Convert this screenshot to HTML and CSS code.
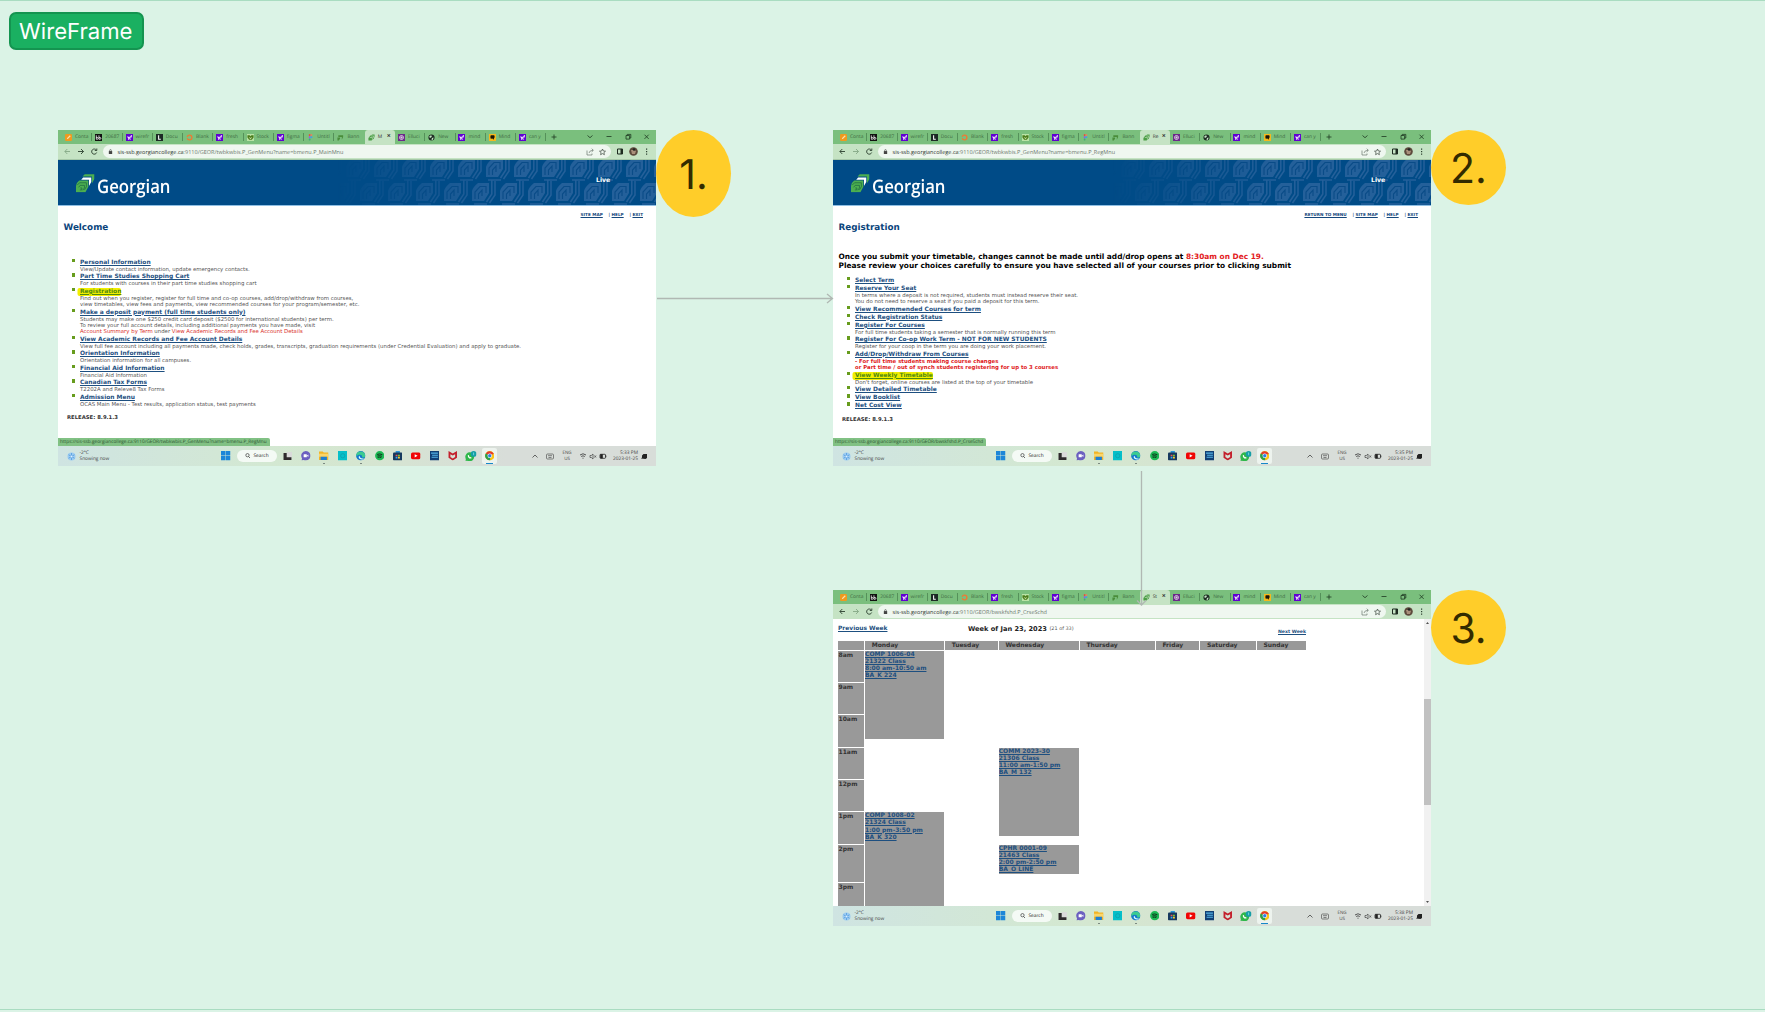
FILE: index.html
```html
<!DOCTYPE html>
<html lang="en">
<head>
<meta charset="utf-8">
<title>WireFrame</title>
<link rel="stylesheet" href="styles.css">
</head>
<body>
<svg class="sprite" aria-hidden="true">
  <defs>
    <symbol id="i-cont" viewBox="0 0 16 16"><rect width="16" height="16" rx="3" fill="#f09a1f"/><path d="M4 12l1-3 6-6 2 2-6 6z" fill="#fbe3b0"/></symbol>
    <symbol id="i-bb" viewBox="0 0 16 16"><rect width="16" height="16" fill="#111"/><path d="M3 3v9h2.500a2 2 0 0 0 0-4H3M9 3v9h2.500a2 2 0 0 0 0-4H9" fill="none" stroke="#fff" stroke-width="1.700"/></symbol>
    <symbol id="i-yahoo" viewBox="0 0 16 16"><rect width="16" height="16" fill="#5f01d1"/><path d="M2.500 5.500h3l1.500 3 1.500-3h2l-3.500 8H5l.9-2zM11 3h3l-2 5.500h-2z" fill="#fff"/><circle cx="10.500" cy="11.500" r="1.300" fill="#fff"/></symbol>
    <symbol id="i-l" viewBox="0 0 16 16"><rect width="16" height="16" fill="#1c2a25"/><path d="M6 3v9h5" fill="none" stroke="#fff" stroke-width="2.400"/></symbol>
    <symbol id="i-ring" viewBox="0 0 16 16"><circle cx="8" cy="8" r="5.500" fill="none" stroke="#ee7a33" stroke-width="3" stroke-dasharray="14 3"/></symbol>
    <symbol id="i-frog" viewBox="0 0 16 16"><rect width="16" height="16" fill="#b9e3a5"/><path d="M1 3h5l2 2 2-2h5v5l-4 5H5L1 8z" fill="#4b7d1d"/><path d="M4 7l3 4h2l3-4-4 2z" fill="#e8f3c4"/></symbol>
    <symbol id="i-figma" viewBox="0 0 16 16"><rect x="4" y="0" width="4" height="5" rx="2" fill="#e8503a"/><rect x="8" y="0" width="4" height="5" rx="2" fill="#e88060"/><rect x="4" y="5" width="4" height="5" rx="2" fill="#9259e8"/><circle cx="10" cy="7.500" r="2.300" fill="#39a5e8"/><rect x="4" y="10" width="4" height="5" rx="2" fill="#3fb173"/></symbol>
    <symbol id="i-banner" viewBox="0 0 16 16"><path d="M3 3h11v4l-3 6v-6H3zM1 8h6v3l-3 4H1z" fill="#4a8d3b"/></symbol>
    <symbol id="i-leaf" viewBox="0 0 16 16"><path d="M1 15V9l4-5 5-3h5v5l-2 5-5 4z" fill="#4b9d45"/><path d="M4 8h6v5M7 4.500h6V9" fill="none" stroke="#d9f0d5" stroke-width="1.200"/></symbol>
    <symbol id="i-ellu" viewBox="0 0 16 16"><rect width="16" height="16" fill="#6b2a8a"/><circle cx="8" cy="8" r="4.500" fill="none" stroke="#fff" stroke-width="1.600"/><path d="M5 8h6M8 5v6" stroke="#fff" stroke-width="1.200"/></symbol>
    <symbol id="i-globe" viewBox="0 0 16 16"><circle cx="8" cy="8" r="7" fill="#1d2b22"/><path d="M3 5l4-2 2 2-2 3-3 1zM9 9l4-1-2 5-3 1z" fill="#c3e3c4"/></symbol>
    <symbol id="i-mind" viewBox="0 0 16 16"><rect width="16" height="16" fill="#f5b91d"/><path d="M4 3h8l1 4-3 6-2-3-4 1-1-4z" fill="#1a1508"/></symbol>
    <symbol id="i-logo" viewBox="0 0 57 57"><path d="M27 1h30v14l-8 14V8H20z" fill="#4caf50"/><path d="M16 18l6-7h25v14l-7 12V18z" fill="#fff"/><path d="M0 36q0-8 10-16h28v19L29 56H0z" fill="#4caf50"/><path d="M4 34l7-7h21v12l-6 10M8 41l5-6h13v8l-5 7M12 49h6v-6h-5" fill="none" stroke="#17603f" stroke-width="2"/></symbol>

    <symbol id="i-cloud" viewBox="0 0 18 18"><circle cx="9" cy="9" r="8" fill="#9ccbf0"/><path d="M9 2v14M3 5.500l12 7M3 12.500l12-7" stroke="#4b98e0" stroke-width="1.500"/><circle cx="9" cy="9" r="2" fill="#dff0ff"/></symbol>
    <symbol id="i-win" viewBox="0 0 18 18"><path d="M0 0h8.600v8.600H0zM9.400 0H18v8.600H9.400zM0 9.400h8.600V18H0zM9.400 9.400H18V18H9.400z" fill="#1c86d8"/></symbol>
    <symbol id="i-task" viewBox="0 0 18 18"><rect x="7" y="2" width="11" height="11" fill="#dadada"/><path d="M1 4h6v8h9v5H1z" fill="#2e2a2c"/></symbol>
    <symbol id="i-chat" viewBox="0 0 18 18"><path d="M9 0a9 9 0 1 1-4 17l-4 1 1-4A9 9 0 0 1 9 0z" fill="#6b5fc0"/><rect x="5" y="6" width="6" height="6" rx="1" fill="#fff"/><path d="M11 9l3-2.500v5z" fill="#fff"/></symbol>
    <symbol id="i-folder" viewBox="0 0 18 18"><path d="M0 1h7l2 2h9v14H0z" fill="#f3b426"/><path d="M0 5h18v6H0z" fill="#fad569"/><path d="M3 11h12v6H3z" fill="#1f7fd1"/></symbol>
    <symbol id="i-cyan" viewBox="0 0 18 18"><rect width="18" height="18" fill="#05bfc9"/><circle cx="9" cy="9" r="4" fill="none" stroke="#12919e"/></symbol>
    <symbol id="i-edge" viewBox="0 0 18 18"><circle cx="9" cy="9" r="8.800" fill="#1478cc"/><path d="M.5 7a8.700 8.700 0 0 1 17 2c0 3-3 4-6 3 1-3-1-5-4-5S2 8 1 10z" fill="#3ccb8f"/><path d="M7 9c0 4 3 6 8 5l-2 2c-4 1-8-1-8-5z" fill="#dff"/></symbol>
    <symbol id="i-spot" viewBox="0 0 18 18"><circle cx="9" cy="9" r="8.800" fill="#1db954"/><path d="M4 6.500q5-2 10 .5M4.500 9.500q4.500-1.500 8.500.5M5 12q4-1 7 .5" fill="none" stroke="#0b1f12" stroke-width="1.600"/></symbol>
    <symbol id="i-store" viewBox="0 0 18 18"><path d="M5 0h8v4H5z" fill="#2c95d8"/><rect y="3" width="18" height="15" rx="2" fill="#17395f"/><path d="M5 7h3.500v3H5z" fill="#e55"/><path d="M9.500 7H13v3H9.500z" fill="#7c3"/><path d="M5 11h3.500v3H5z" fill="#3ae"/><path d="M9.500 11H13v3H9.500z" fill="#fc3"/></symbol>
    <symbol id="i-yt" viewBox="0 0 18 18"><rect y="3" width="18" height="12.500" rx="3" fill="#f00505"/><path d="M7 6l5.500 3.200L7 12.500z" fill="#fff"/></symbol>
    <symbol id="i-news" viewBox="0 0 18 18"><rect width="18" height="18" fill="#123f74"/><path d="M2 4h13M4 8h11M3 12h12" stroke="#55b4e6" stroke-width="2"/></symbol>
    <symbol id="i-mcafee" viewBox="0 0 18 18"><path d="M1 0l8 4.500L17 0v13l-8 5-8-5zM4.500 6v5.500L9 14l4.500-2.500V6L9 8.500z" fill="#c3202c" fill-rule="evenodd"/></symbol>
    <symbol id="i-wa" viewBox="0 0 22 20"><circle cx="9" cy="11" r="8.500" fill="#2fb74a"/><path d="M1 19l1-5 4 4z" fill="#2fb74a"/><path d="M5.500 7.500c-1 5 4 9 7.500 6l-2-2-1.500.5-2-2.500.5-1.500z" fill="#fff"/><circle cx="16.500" cy="5.500" r="5.500" fill="#169ea6"/><path d="M15.500 4l1-.7V8" stroke="#bff" fill="none"/></symbol>
    <symbol id="i-chrome" viewBox="0 0 18 18"><circle cx="9" cy="9" r="8.800" fill="#fbc417"/><path d="M9 9L1.400 4.500A8.800 8.800 0 0 1 16.700 5z" fill="#e33b2e"/><path d="M9 9l1 8.700A8.800 8.800 0 0 1 1.400 4.500z" fill="#2da04d"/><circle cx="9" cy="9" r="4.200" fill="#fff"/><circle cx="9" cy="9" r="3.200" fill="#2f7de8"/></symbol>

    <symbol id="i-nav-shapes" viewBox="0 0 45 15"><path d="M38.300 6A2.600 2.600 0 1 0 38.700 8.500M38.800 4.500v2h-2" fill="none" stroke="#2c4130" stroke-width=".9"/></symbol>
    <symbol id="i-lock" viewBox="0 0 6 8"><rect x="1" y="3.500" width="4" height="3.500" fill="#444"/><path d="M2 4V2.700a1 1 0 0 1 2 0V4" fill="none" stroke="#444" stroke-width=".7"/></symbol>
    <symbol id="i-bookmark" viewBox="0 0 24 12"><path d="M2 4.500V9h5V7.500M4 7q.5-2.700 4-2.700M6.700 2.700l1.700 1.600-1.700 1.600" fill="none" stroke="#6c776e" stroke-width=".7"/><path d="M17.500 3l.9 2 2.100.2-1.600 1.400.5 2.100-1.900-1.100-1.900 1.100.5-2.100-1.600-1.400 2.100-.2z" fill="none" stroke="#3a453c" stroke-width=".7"/></symbol>
    <symbol id="i-tools" viewBox="0 0 45 15"><path d="M6.500 5h5v5h-5z" fill="none" stroke="#1d2b20"/><path d="M9.500 5H12v5H9.500z" fill="#1d2b20"/><circle cx="22.500" cy="7.500" r="4.300" fill="#5d4a3c"/><path d="M20 6h3l2 1-1 3h-3z" fill="#a98f7a"/><circle cx="23" cy="5.500" r="1.200" fill="#222"/><path d="M35 4.500h1.200v1.200H35zM35 7h1.200v1.200H35zM35 9.500h1.200v1.200H35z" fill="#2c4130"/></symbol>

    <g id="leaf-shape">
      <path d="M2 20V10q1-4 6-8H19V12L14 20z" fill="#24609a"/>
      <path d="M5 18V11L10 5.500H16V12M8.500 18v-5L12 9v6" fill="none" stroke="#0a4c88" stroke-width="1.200"/>
      <path d="M16.500 21L21.800 13V-1M19.500 22L25 14V0M4 23H17" fill="none" stroke="#24609a" stroke-width="1.500"/>
    </g>
    <pattern id="leaves" width="28" height="48" patternUnits="userSpaceOnUse" patternTransform="translate(6 -3)">
      <use href="#leaf-shape"/>
      <use href="#leaf-shape" x="14" y="24"/>
      <use href="#leaf-shape" x="-14" y="24"/>
    </pattern>
  </defs>
</svg>

<template id="tabs-template">
  <div class="tabs">
    <span class="tab"><svg><use href="#i-cont"/></svg><i>Conta</i></span>
    <span class="tab"><svg><use href="#i-bb"/></svg><i>20687</i></span>
    <span class="tab"><svg><use href="#i-yahoo"/></svg><i>wirefr</i></span>
    <span class="tab"><svg><use href="#i-l"/></svg><i>Docu</i></span>
    <span class="tab"><svg><use href="#i-ring"/></svg><i>Blank</i></span>
    <span class="tab"><svg><use href="#i-yahoo"/></svg><i>fresh</i></span>
    <span class="tab"><svg><use href="#i-frog"/></svg><i>Stock</i></span>
    <span class="tab"><svg><use href="#i-yahoo"/></svg><i>figma</i></span>
    <span class="tab"><svg><use href="#i-figma"/></svg><i>Untitl</i></span>
    <span class="tab last"><svg><use href="#i-banner"/></svg><i>Bann</i></span>
    <span class="tab active"><svg><use href="#i-leaf"/></svg><i class="current"></i><b>×</b></span>
    <span class="tab"><svg><use href="#i-ellu"/></svg><i>Elluci</i></span>
    <span class="tab"><svg><use href="#i-globe"/></svg><i>New</i></span>
    <span class="tab"><svg><use href="#i-yahoo"/></svg><i>mind</i></span>
    <span class="tab"><svg><use href="#i-mind"/></svg><i>Mind</i></span>
    <span class="tab"><svg><use href="#i-yahoo"/></svg><i>can y</i></span>
    <svg class="controls" viewBox="0 0 110 14"><path d="M5.500 7h5M8 4.500v5M41.500 5.500l2.500 2.200 2.500-2.200M60.500 6.500h5M80 5.500h3.600v3.600H80zM81.200 5.500V4.400h3.600V8h-1.200M98.500 4.700l4.200 4.200M102.700 4.700l-4.200 4.200" fill="none" stroke="#1e3a22" stroke-width=".8"/></svg>
  </div>
</template>

<template id="taskbar-template">
  <div class="taskbar">
    <svg class="weather"><use href="#i-cloud"/></svg>
    <span class="temp">-2°C<br>Snowing now</span>
    <div class="apps">
      <svg><use href="#i-win"/></svg>
      <span class="search"><svg viewBox="0 0 10 10"><circle cx="4.500" cy="4" r="3" fill="none" stroke="#222" stroke-width="1.100"/><path d="M6.500 6.500l3 3" stroke="#222" stroke-width="1.200"/></svg>Search</span>
      <svg><use href="#i-task"/></svg>
      <svg><use href="#i-chat"/></svg>
      <span class="running"><svg><use href="#i-folder"/></svg></span>
      <svg><use href="#i-cyan"/></svg>
      <span class="running"><svg><use href="#i-edge"/></svg></span>
      <svg><use href="#i-spot"/></svg>
      <svg><use href="#i-store"/></svg>
      <svg><use href="#i-yt"/></svg>
      <svg><use href="#i-news"/></svg>
      <svg><use href="#i-mcafee"/></svg>
      <svg class="wide"><use href="#i-wa"/></svg>
      <span class="running focused"><svg><use href="#i-chrome"/></svg></span>
    </div>
    <svg class="tray" viewBox="0 0 24 20"><path d="M1.500 11.500L4 9l2.500 2.500" fill="none" stroke="#444" stroke-width=".8"/><rect x="15.500" y="8" width="7" height="5" rx="1" fill="none" stroke="#555" stroke-width=".7"/><path d="M17 9.700h4M17.500 11.500h3" stroke="#555" stroke-width=".7"/></svg>
    <span class="lang">ENG<br>US</span>
    <svg class="net" viewBox="0 0 28 20"><path d="M1 9q3-2.500 6 0M2.200 10.500q1.800-1.400 3.600 0M3.500 12.200h1" fill="none" stroke="#444" stroke-width=".9"/><path d="M11 9.500h1.300L14 8v5l-1.700-1.500H11zM15.500 9.500l1.500 2M17 9.500l-1.500 2" fill="none" stroke="#444" stroke-width=".7"/><rect x="21" y="8.300" width="5.500" height="4" rx=".7" fill="none" stroke="#222" stroke-width=".8"/><path d="M21.500 8.500h2v3.600h-2zM27 9.500v1.700" fill="#222" stroke="#222" stroke-width=".6"/></svg>
    <span class="clock"><span class="time"></span><br>2023-01-25</span>
    <svg class="bell" viewBox="0 0 8 8"><path d="M1 6.500l1-1V3.500L3.500 2H7v4L5.500 7z" fill="#222"/></svg>
  </div>
</template>

<main class="board">
  <h1 class="tag">WireFrame</h1>

  <section class="window w1" data-tab="M" data-time="5:33 PM">
    <div class="toolbar">
      <svg class="nav" viewBox="0 0 45 15"><g fill="none" stroke="#2c4130" stroke-width=".9"><path stroke="#84a886" d="M12 7.500H7M9.300 5L6.800 7.500 9.300 10"/><path d="M20 7.500h5.500M23 5l2.500 2.500L23 10"/></g><use href="#i-nav-shapes" width="45" height="15"/></svg>
      <div class="address"><svg class="lock"><use href="#i-lock"/></svg><span class="url"><b>sis-ssb.georgiancollege.ca</b>:9110/GEOR/twbkwbis.P_GenMenu?name=bmenu.P_MainMnu</span><svg class="bookmark"><use href="#i-bookmark"/></svg></div>
      <svg class="nav"><use href="#i-tools"/></svg>
    </div>
    <div class="page">
      <header class="banner"><svg class="logo"><use href="#i-logo"/></svg><span class="brand">Georgian</span><svg class="pattern"><rect width="318" height="45" fill="url(#leaves)"/></svg><span class="live">Live</span></header>
      <nav class="links"><a>SITE MAP</a><span>| <a>HELP</a></span><span>| <a>EXIT</a></span></nav>
      <h2>Welcome</h2>
      <ul class="menu">
        <li><a>Personal Information</a><p>View/Update contact information, update emergency contacts.</p></li>
        <li><a>Part Time Studies Shopping Cart</a><p>For students with courses in their part time studies shopping cart</p></li>
        <li><a class="hl">Registration</a><p>Find out when you register, register for full time and co-op courses, add/drop/withdraw from courses,<br>view timetables, view fees and payments, view recommended courses for your program/semester, etc.</p></li>
        <li><a>Make a deposit payment (full time students only)</a><p>Students may make one $250 credit card deposit ($2500 for international students) per term.<br>To review your full account details, including additional payments you have made, visit<br><em>Account Summary by Term</em> under <em>View Academic Records and Fee Account Details</em></p></li>
        <li><a>View Academic Records and Fee Account Details</a><p>View full fee account including all payments made, check holds, grades, transcripts, graduation requirements (under Credential Evaluation) and apply to graduate.</p></li>
        <li><a>Orientation Information</a><p>Orientation information for all campuses.</p></li>
        <li><a>Financial Aid Information</a><p>Financial Aid Information</p></li>
        <li><a>Canadian Tax Forms</a><p>T2202A and Releve8 Tax Forms</p></li>
        <li><a>Admission Menu</a><p>OCAS Main Menu - Test results, application status, test payments</p></li>
      </ul>
      <p class="release">RELEASE: 8.9.1.3</p>
      <p class="status">https://sis-ssb.georgiancollege.ca:9110/GEOR/twbkwbis.P_GenMenu?name=bmenu.P_RegMnu</p>
    </div>
  </section>

  <section class="window w2" data-tab="Re" data-time="5:35 PM">
    <div class="toolbar">
      <svg class="nav" viewBox="0 0 45 15"><g fill="none" stroke="#2c4130" stroke-width=".9"><path d="M12 7.500H7M9.300 5L6.800 7.500 9.300 10"/><path stroke="#84a886" d="M20 7.500h5.500M23 5l2.500 2.500L23 10"/></g><use href="#i-nav-shapes" width="45" height="15"/></svg>
      <div class="address"><svg class="lock"><use href="#i-lock"/></svg><span class="url"><b>sis-ssb.georgiancollege.ca</b>:9110/GEOR/twbkwbis.P_GenMenu?name=bmenu.P_RegMnu</span><svg class="bookmark"><use href="#i-bookmark"/></svg></div>
      <svg class="nav"><use href="#i-tools"/></svg>
    </div>
    <div class="page">
      <header class="banner"><svg class="logo"><use href="#i-logo"/></svg><span class="brand">Georgian</span><svg class="pattern"><rect width="318" height="45" fill="url(#leaves)"/></svg><span class="live">Live</span></header>
      <nav class="links"><a>RETURN TO MENU</a><span>| <a>SITE MAP</a></span><span>| <a>HELP</a></span><span>| <a>EXIT</a></span></nav>
      <h2>Registration</h2>
      <p class="notice">Once you submit your timetable, changes cannot be made until add/drop opens at <em>8:30am on Dec 19.</em><br>Please review your choices carefully to ensure you have selected all of your courses prior to clicking submit</p>
      <ul class="menu after-notice">
        <li><a>Select Term</a></li>
        <li><a>Reserve Your Seat</a><p>In terms where a deposit is not required, students must instead reserve their seat.<br>You do not need to reserve a seat if you paid a deposit for this term.</p></li>
        <li><a>View Recommended Courses for term</a></li>
        <li><a>Check Registration Status</a></li>
        <li><a>Register For Courses</a><p>For full time students taking a semester that is normally running this term</p></li>
        <li><a>Register For Co-op Work Term - NOT FOR NEW STUDENTS</a><p>Register for your coop in the term you are doing your work placement.</p></li>
        <li><a>Add/Drop/Withdraw From Courses</a><p class="warn">- For full time students making course changes<br>or Part time / out of synch students registering for up to 3 courses</p></li>
        <li><a class="hl">View Weekly Timetable</a><p>Don't forget, online courses are listed at the top of your timetable</p></li>
        <li><a>View Detailed Timetable</a></li>
        <li><a>View Booklist</a></li>
        <li><a>Net Cost View</a></li>
      </ul>
      <p class="release">RELEASE: 8.9.1.3</p>
      <p class="status">https://sis-ssb.georgiancollege.ca:9110/GEOR/bwskfshd.P_CrseSchd</p>
    </div>
  </section>

  <section class="window w3" data-tab="St" data-time="5:38 PM">
    <div class="toolbar">
      <svg class="nav" viewBox="0 0 45 15"><g fill="none" stroke="#2c4130" stroke-width=".9"><path d="M12 7.500H7M9.300 5L6.800 7.500 9.300 10"/><path stroke="#84a886" d="M20 7.500h5.500M23 5l2.500 2.500L23 10"/></g><use href="#i-nav-shapes" width="45" height="15"/></svg>
      <div class="address"><svg class="lock"><use href="#i-lock"/></svg><span class="url"><b>sis-ssb.georgiancollege.ca</b>:9110/GEOR/bwskfshd.P_CrseSchd</span><svg class="bookmark"><use href="#i-bookmark"/></svg></div>
      <svg class="nav"><use href="#i-tools"/></svg>
    </div>
    <div class="page schedule">
      <div class="week">
        <div class="weekbar"><a class="prev">Previous Week</a><strong>Week of Jan 23, 2023</strong><small>(21 of 33)</small><a class="next">Next Week</a></div>
        <div class="grid">
          <b class="day"></b><b class="day">Monday</b><b class="day">Tuesday</b><b class="day">Wednesday</b><b class="day">Thursday</b><b class="day">Friday</b><b class="day">Saturday</b><b class="day">Sunday</b>
          <b class="hour">8am</b><b class="hour">9am</b><b class="hour">10am</b><b class="hour">11am</b><b class="hour">12pm</b><b class="hour">1pm</b><b class="hour">2pm</b><b class="hour">3pm</b>
          <a class="event mon-am">COMP 1006-04<br>21322 Class<br>8:00 am-10:50 am<br>BA_K 224</a>
          <a class="event wed-am">COMM 2023-30<br>21306 Class<br>11:00 am-1:50 pm<br>BA_M 132</a>
          <a class="event mon-pm">COMP 1008-02<br>21324 Class<br>1:00 pm-3:50 pm<br>BA_K 320</a>
          <a class="event wed-pm">CPHR 0001-09<br>21463 Class<br>2:00 pm-2:50 pm<br>BA_O LINE</a>
        </div>
      </div>
      <svg class="scrollbar" viewBox="0 0 7 287"><rect width="7" height="287" fill="#f1f1f1"/><path d="M2 5l1.500-2L5 5zM2 282l1.500 2L5 282z" fill="#505050"/><rect y="80" width="7" height="106" fill="#c1c1c1"/></svg>
    </div>
  </section>

  <svg class="connector" viewBox="0 0 1765 1012" fill="none" stroke="#b0b8b3" stroke-width="1.300"><path d="M657 298.500h175M827 294l5.500 4.500L827 303M1141.500 471v134M1137 600.500l4.500 4.500 4.500-4.500"/></svg>
  <span class="step s1">1.</span>
  <span class="step s2">2.</span>
  <span class="step s3">3.</span>
</main>
<script src="script.js"></script>
</body>
</html>
```
FILE: script.js
```js
// Every browser window shares the same tab strip and taskbar.
document.querySelectorAll('.window').forEach(function (win) {
  var tabs = document.getElementById('tabs-template').content.cloneNode(true);
  tabs.querySelector('.current').textContent = win.dataset.tab;
  win.prepend(tabs);
  var taskbar = document.getElementById('taskbar-template').content.cloneNode(true);
  taskbar.querySelector('.time').textContent = win.dataset.time;
  win.append(taskbar);
});
```
FILE: styles.css
```css
* { box-sizing: border-box; }
body { margin: 0; background: #dbf3e6; overflow: hidden; }
.sprite { position: absolute; width: 0; height: 0; }
p, h1, h2, ul { margin: 0; padding: 0; }
i, em { font-style: normal; }
a { text-decoration: underline; }
svg { flex: none; }

.board {
  position: relative;
  width: 1765px;
  height: 1010px;
  background: #dbf3e6;
  border-top: 1px solid #a9dcc1;
  border-bottom: 1px solid #a9dcc1;
  font-family: "DejaVu Sans", Verdana, sans-serif;
  text-rendering: geometricPrecision;
}
.tag {
  position: absolute;
  left: 9px;
  top: 11px;
  width: 135px;
  height: 38px;
  padding-right: 1.500px;
  border: 2px solid #149450;
  border-radius: 7px;
  background: #1ab061;
  color: #fff;
  font: 400 22.100px/37px Inter, sans-serif;
  text-align: center;
}

/* Browser windows */
.window {
  position: absolute;
  display: flex;
  flex-direction: column;
  width: 598px;
  height: 336px;
  background: #fff;
  overflow: hidden;
}
.w1 { left: 58px; top: 129px; }
.w2 { left: 833px; top: 129px; }
.w3 { left: 833px; top: 589px; }

.tabs {
  display: flex;
  flex: none;
  height: 14px;
  padding-left: 4px;
  background: #7abf7d;
  font: 4.900px/14px "Open Sans", sans-serif;
  color: #3f6b43;
}
.tab {
  display: flex;
  align-items: center;
  width: 30.270px;
  height: 14px;
  padding-left: 3px;
  flex: none;
}
.tab > svg { width: 7px; height: 7px; }
.tab i { width: 14px; margin-left: 3px; white-space: nowrap; }
.tab::after { content: ""; width: 1px; height: 8px; margin-left: 3px; background: #55915a; }
.tab.last::after, .tab.active::after { display: none; }
.tab.active { background: #c5e3c4; border-radius: 3px 3px 0 0; color: #333; }
.tab.active i { width: 8px; }
.tab.active b { font-size: 7px; margin-left: 1px; }
.controls { width: 110px; height: 14px; }

.toolbar {
  display: flex;
  flex: none;
  align-items: center;
  height: 16px;
  background: #c5e3c4;
  border-bottom: 1px solid #a6c8a8;
}
.nav { width: 45px; height: 15px; }
.address {
  display: flex;
  align-items: center;
  width: 508px;
  height: 12.500px;
  padding-left: 5px;
  border-radius: 7px;
  background: #eff7f0;
}
.lock { width: 5px; height: 7px; margin-right: 4.500px; }
.url { font: 5.520px/12px "Open Sans", sans-serif; color: #6d776e; white-space: nowrap; }
.url b { font-weight: 400; color: #2d332e; }
.bookmark { width: 24px; height: 12px; margin-left: auto; margin-right: 2.500px; }

.page { position: relative; flex: 1; min-height: 0; overflow: hidden; }
.banner {
  position: relative;
  display: flex;
  align-items: flex-start;
  height: 46px;
  padding-left: 18px;
  background: #004b87;
  border-bottom: 1px solid #8fbfe4;
}
.logo { width: 18.500px; height: 18.500px; margin-top: 14px; }
.brand { width: 73px; margin-left: 2px; font: 600 18.600px/53px "Open Sans", sans-serif; color: #fff; transform: scaleX(.9); transform-origin: 0 50%; }
.pattern {
  width: 318px;
  height: 45px;
  margin-left: auto;
  -webkit-mask-image: linear-gradient(to right, transparent, #000 50%);
  mask-image: linear-gradient(to right, transparent, #000 50%);
}
.live { position: absolute; right: 45.700px; top: 15px; color: #fff; font-weight: 700; font-size: 6.190px; line-height: 12px; }
.links { display: flex; justify-content: flex-end; gap: 5.800px; padding: 4.500px 13px 0 0; font-weight: 700; font-size: 4.200px; line-height: 8px; color: #14477c; }
h2 { padding-left: 5.500px; font-size: 8.800px; line-height: 18px; color: #0b457c; }

.menu { list-style: none; padding-left: 22px; margin-top: 22.300px; }
.menu li { position: relative; }
.menu li::before { content: ""; position: absolute; left: -8.500px; top: 0; width: 3.500px; height: 3.500px; background: #679c1d; }
.menu a { display: block; width: max-content; font-weight: 700; font-size: 5.940px; line-height: 8.100px; color: #1d4f80; }
.menu p { font-size: 5.400px; line-height: 6.370px; color: #555; white-space: nowrap; }
.menu em { color: #d9302c; }
.menu .warn { color: #e0191c; font-weight: 700; }
.menu .hl { background: #f2ee00; color: #4f8a12; border-radius: 2px; box-shadow: -2.500px 0 0 #f2ee00; }
.notice { padding-left: 5.500px; margin-top: 15px; font-weight: 700; font-size: 7.410px; line-height: 9.300px; color: #000; white-space: nowrap; }
.notice em { color: #e31b23; }
.menu.after-notice { margin-top: 6.500px; }
.release { padding-left: 9px; margin-top: 6px; font-weight: 700; font-size: 5.300px; line-height: 8px; color: #333; }
.status { position: absolute; left: 0; bottom: 0; height: 8px; padding: 0 3px 0 2px; border-radius: 0 2px 0 0; background: #81c184; color: #2d5531; font: 4.740px/8px "Open Sans", sans-serif; }

/* Weekly timetable */
.schedule { display: flex; margin-top: -1px; padding-left: 5px; background: #fff; }
.week { width: 468px; }
.weekbar { display: flex; height: 22px; font-size: 5.940px; line-height: 20px; color: #1d4f80; font-weight: 700; white-space: nowrap; }
.prev { width: 49.500px; margin-right: 80.500px; }
.weekbar strong { font-size: 6.630px; color: #222; }
.weekbar small { margin-left: 2.500px; font-size: 4.900px; line-height: 21px; font-weight: 400; color: #555; }
.next { margin-left: auto; font-size: 4.610px; line-height: 27px; }
.grid {
  display: grid;
  grid-template-columns: 26px 79px 52.700px 80px 75px 43.500px 55.500px 49px;
  grid-template-rows: 8.500px repeat(6, 31.350px) 37.400px 24px;
  gap: 1px;
  font-size: 6.020px;
  line-height: 7.250px;
  color: #333;
}
.day, .hour, .event { background: #999; }
.day { grid-row: 1; padding-left: 6.700px; line-height: 9px; }
.hour { grid-column: 1; padding-top: 1px; padding-left: .5px; }
.event { font-weight: 700; color: #1d4f80; white-space: nowrap; margin-bottom: 7.500px; overflow: hidden; }
.mon-am { grid-area: 2 / 2 / span 3; }
.wed-am { grid-area: 5 / 4 / span 3; }
.mon-pm { grid-area: 7 / 2 / span 3; margin-bottom: 0; }
.wed-pm { grid-area: 8 / 4; }
.scrollbar { width: 7px; height: 287px; margin-left: auto; }

/* Taskbar */
.taskbar {
  display: flex;
  flex: none;
  height: 20px;
  align-items: center;
  background: linear-gradient(to right, #cfe4e2, #d3e8d2 35%, #d5e6d0 50%, #d8ddd9 75%);
  font: 4.800px/6.400px "Open Sans", sans-serif;
  color: #444;
}
.weather { width: 9px; height: 9px; margin-left: 8.500px; }
.temp { width: 141.500px; margin-left: 4px; flex: none; }
.apps { display: flex; align-items: center; flex: none; width: 310px; gap: 8.850px; }
.apps svg { width: 9.500px; height: 9.500px; }
.apps .wide { width: 11.500px; height: 10.500px; margin: 0 -1px; }
.search {
  display: flex;
  align-items: center;
  justify-content: center;
  gap: 3px;
  width: 40px;
  height: 12.500px;
  margin: 0 -2.800px 0 -2.600px;
  border-radius: 7px;
  background: #f4faf5;
  color: #222;
}
.search svg { width: 5.500px; height: 5.500px; }
.running { position: relative; display: flex; }
.running::after { content: ""; position: absolute; left: 3.500px; bottom: -2.800px; width: 2.500px; height: 1px; background: #7c8a82; }
.focused { padding: 3px; margin: 0 -3px; border-radius: 2px; background: #edf3ee; }
.focused::after { left: 4.500px; bottom: 0; width: 6.500px; background: #1787c9; }
.tray { width: 24px; height: 20px; }
.lang { width: 24px; text-align: center; font-size: 4.500px; }
.net { width: 28px; height: 20px; }
.clock { width: 31px; text-align: right; }
.bell { width: 8px; height: 8px; margin-left: 2px; }

/* Connectors and step markers */
.connector { position: absolute; left: 0; top: -1px; width: 1765px; height: 1012px; }
.step { position: absolute; width: 75px; height: 75px; border-radius: 50%; background: #ffcd29; color: #332b00; font: 41px/76px Inter, sans-serif; text-align: center; }
.s1 { left: 656px; top: 129px; height: 87px; line-height: 88px; }
.s2 { left: 1431px; top: 129px; }
.s3 { left: 1431px; top: 589px; }
```
